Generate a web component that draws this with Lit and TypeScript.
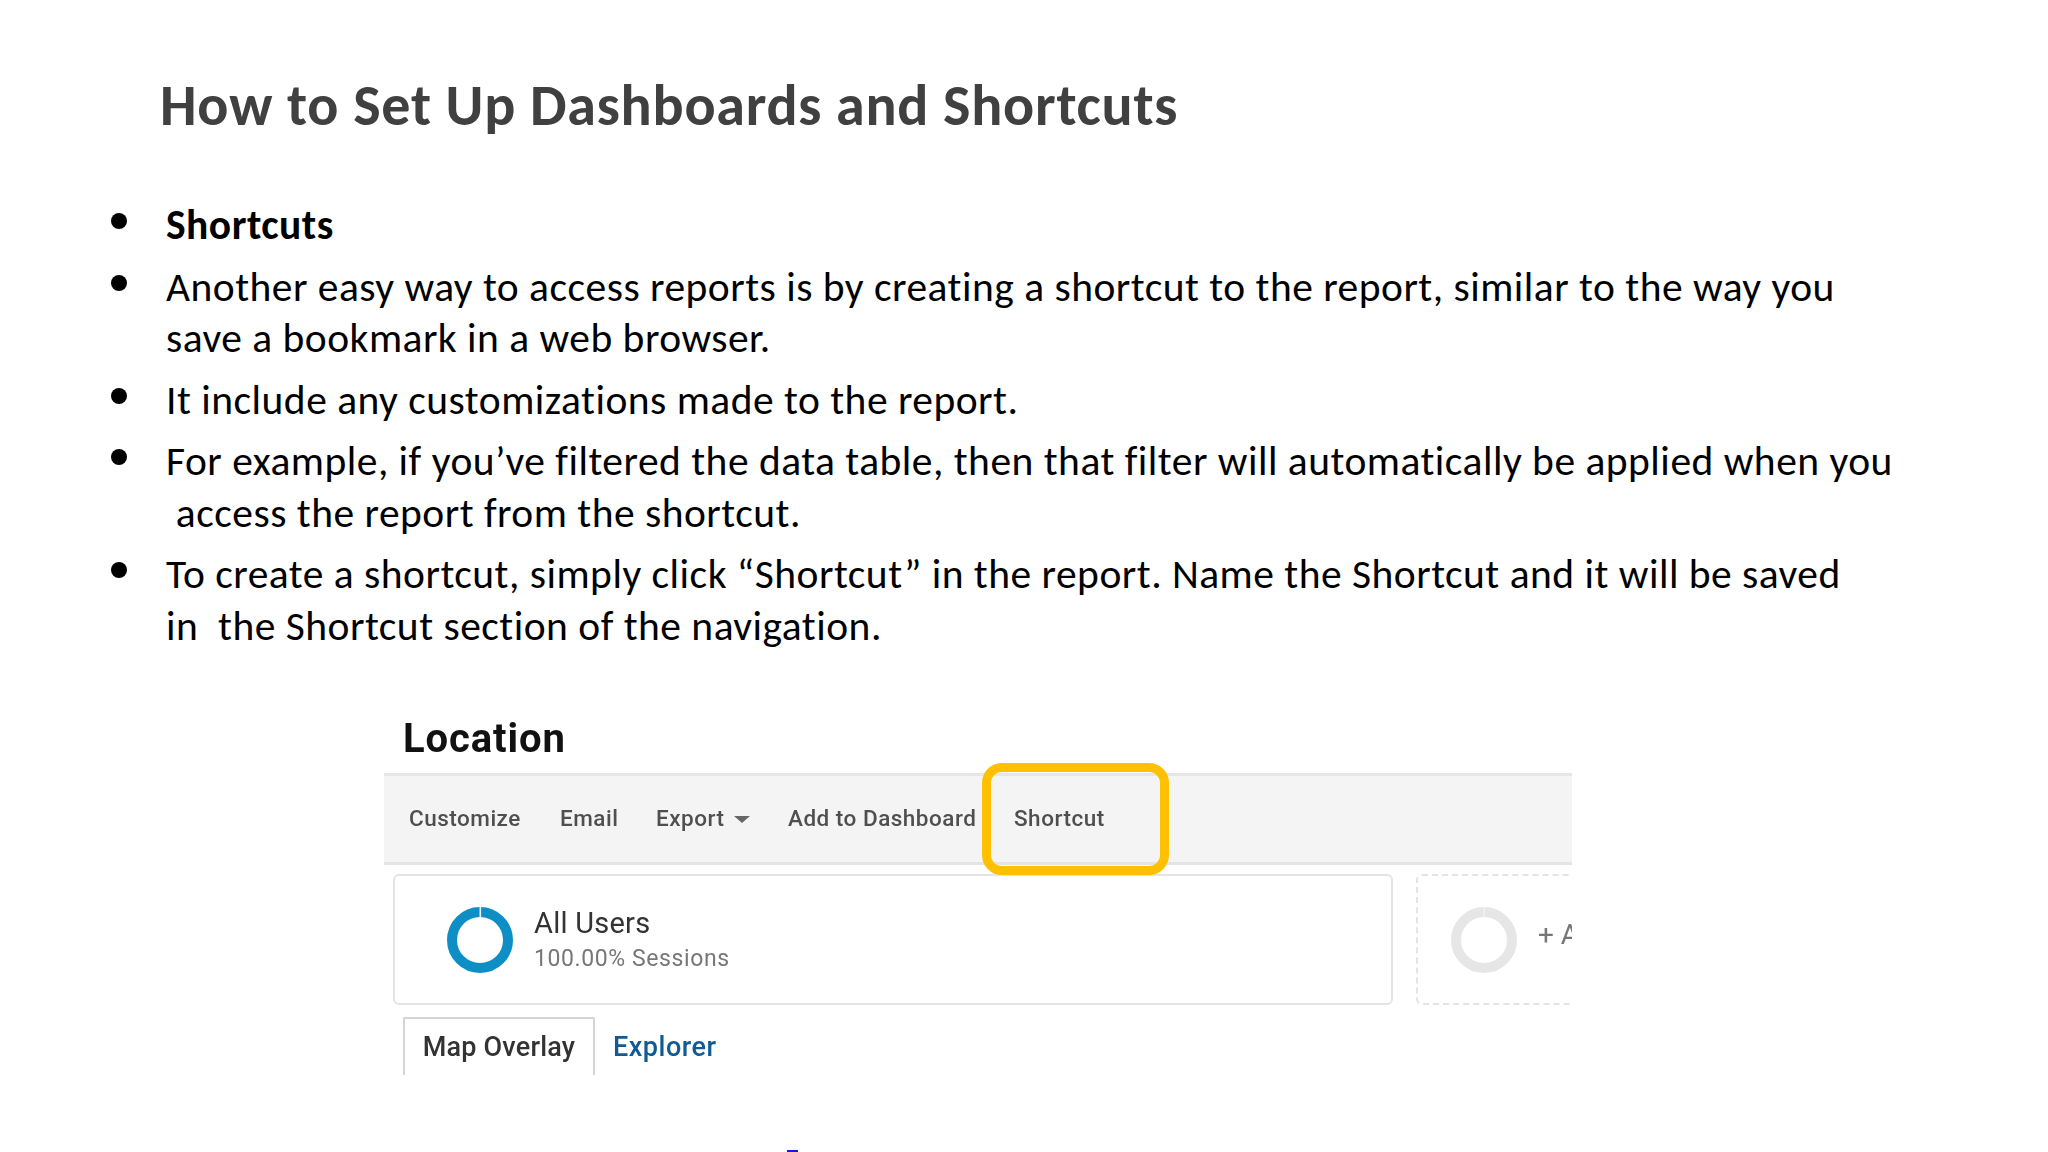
import { LitElement, html, css } from "lit";
import { customElement } from "lit/decorators.js";

@customElement("app-root")
export class AppRoot extends LitElement {
  static styles = css`
    :host { display: block; width: 2048px; height: 1152px; background: #fff; overflow: hidden; position: relative; font-family: Carlito, Lato, "Open Sans", sans-serif; }
    .slide { display: flex; flex-direction: column; padding: 73px 0 0 0; }
    h1 { margin: 0 0 0 160px; font-size: 58px; line-height: 66px; font-weight: 700; color: #404040; letter-spacing: 0.76px; white-space: nowrap; }
    ul { list-style: none; margin: 60px 0 0 0; padding: 0; display: flex; flex-direction: column; gap: 10px; }
    li { display: flex; font-size: 41.5px; line-height: 51.5px; color: #000; white-space: nowrap; letter-spacing: 0.49px; }
    .dot { width: 16px; height: 16px; border-radius: 50%; background: #000; margin: 14px 39px 0 111px; flex: none; }
    b { font-weight: 700; }
    .shot { width: 1188px; height: 360px; position: absolute; left: 384px; top: 715px; overflow: hidden; font-family: Roboto, sans-serif; filter: blur(0.5px); }
    .loc { font-size: 40px; line-height: 48px; font-weight: 700; color: #111; margin: 0 0 0 19px; letter-spacing: 0.9px; height: 58px; }
    .bar { display: flex; align-items: flex-start; padding-top: 27px; box-sizing: border-box; background: #f4f4f4; border-top: 3px solid #e6e6e6; border-bottom: 3px solid #e4e4e4; height: 92px; color: #4f4f4f; font-size: 22.5px; line-height: 30px; font-weight: 500; letter-spacing: 0.5px; }
    .bar span { display: inline-block; white-space: nowrap; }
    .c1 { margin-left: 25px; width: 151px; }
    .c2 { width: 96px; }
    .c3 { width: 132px; }
    .c4 { width: 226px; }
    .caret { display: inline-block; width: 0; height: 0; border-left: 8px solid transparent; border-right: 8px solid transparent; border-top: 7px solid #666; margin-left: 10px; vertical-align: 3px; }
    .cards { display: flex; margin: 9px 0 0 9px; gap: 23px; }
    .card { width: 1000px; height: 131px; box-sizing: border-box; border: 2px solid #e4e4e4; border-radius: 6px; display: flex; align-items: center; padding-left: 52px; gap: 20px; flex: none; }
    .add { width: 300px; height: 131px; box-sizing: border-box; border: 2px dashed #e4e4e4; border-radius: 6px; display: flex; align-items: center; padding-left: 33px; gap: 21px; flex: none; color: #777; font-size: 28px; }
    .add span { white-space: nowrap; margin-bottom: 10px; }
    .ring { width: 66px; height: 66px; flex: none; display: block; }
    .info { margin-top: 2px; }
    .name { font-size: 29px; line-height: 36px; color: #333; letter-spacing: 0.25px; margin-left: 1px; }
    .sub { font-size: 23px; line-height: 36px; color: #777; letter-spacing: 0.6px; margin-left: 1px; }
    .tabs { display: flex; margin: 12px 0 0 19px; align-items: flex-start; font-size: 27px; line-height: 56px; font-weight: 500; letter-spacing: 0.2px; }
    .tab { width: 192px; height: 70px; box-sizing: border-box; border: 2px solid #d5d5d5; border-bottom: 0; border-radius: 2px 2px 0 0; text-align: center; color: #333; }
    .link { margin: 2px 0 0 18px; color: #115a93; letter-spacing: 0.5px; }
    .ybox { position: absolute; left: 982px; top: 763px; width: 187px; height: 112px; box-sizing: border-box; border: 9px solid #ffc000; border-radius: 20px; }
    .mark { position: absolute; left: 787px; top: 1150px; width: 11px; height: 2px; background: #1a1acc; }
  `;
  ring(c: string) {
    return html`<svg class="ring" viewBox="0 0 66 66"><circle cx="33" cy="33" r="28" fill="none" stroke=${c} stroke-width="10"></circle><rect x="32.5" y="0" width="1.6" height="10" fill="#f0f0f0"></rect></svg>`;
  }
  render() {
    return html`<div class="slide">
      <h1>How to Set Up Dashboards and Shortcuts</h1>
      <ul>
        <li><i class="dot"></i><div><b>Shortcuts</b></div></li>
        <li><i class="dot"></i><div>Another easy way to access reports is by creating a shortcut to the report, similar to the way you<br>save a bookmark in a web browser.</div></li>
        <li><i class="dot"></i><div>It include any customizations made to the report.</div></li>
        <li><i class="dot"></i><div>For example, if you’ve filtered the data table, then that filter will automatically be applied when you<br>&nbsp;access the report from the shortcut.</div></li>
        <li><i class="dot"></i><div>To create a shortcut, simply click “Shortcut” in the report. Name the Shortcut and it will be saved<br>in&nbsp; the Shortcut section of the navigation.</div></li>
      </ul>
    </div>
    <div class="shot">
      <div class="loc">Location</div>
      <div class="bar"><span class="c1">Customize</span><span class="c2">Email</span><span class="c3">Export<i class="caret"></i></span><span class="c4">Add to Dashboard</span><span>Shortcut</span></div>
      <div class="cards">
        <div class="card">${this.ring("#0d8fc6")}<div class="info"><div class="name">All Users</div><div class="sub">100.00% Sessions</div></div></div>
        <div class="add">${this.ring("#e6e6e6")}<span>+ Add Segment</span></div>
      </div>
      <div class="tabs"><div class="tab">Map Overlay</div><div class="link">Explorer</div></div>
    </div>
    <div class="ybox"></div>
    <div class="mark"></div>`;
  }
}
